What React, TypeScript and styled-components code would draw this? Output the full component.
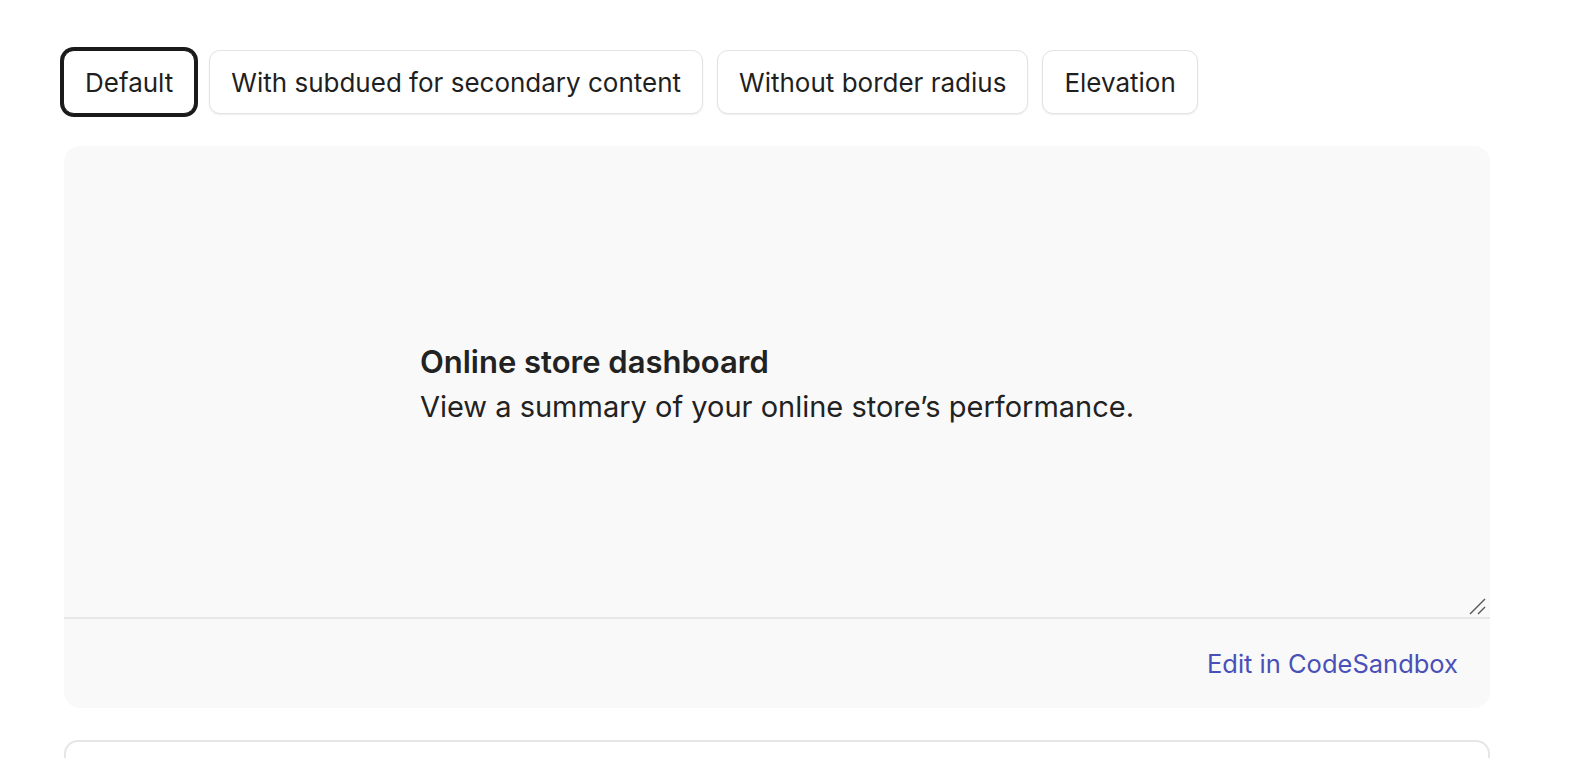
import React, { useState } from "react";
import styled, { createGlobalStyle } from "styled-components";

const Global = createGlobalStyle`
  html, body { margin: 0; padding: 0; background: #ffffff; }
  body { font-family: Inter, "Noto Sans", sans-serif; color: #1f1f1f; overflow: hidden; -webkit-font-smoothing: antialiased; }
  * { box-sizing: border-box; }
`;

const Page = styled.div`
  padding: 50px 0 0 64px;
  width: 1494px;
  display: flex;
  flex-direction: column;
`;

const Tabs = styled.div`
  display: flex;
  gap: 14px;
  align-items: center;
  margin-left: -1px;
`;

const Tab = styled.button<{ $active?: boolean }>`
  height: 64px;
  padding: 0 21px;
  border-radius: 11px;
  border: 1px solid ${(p) => (p.$active ? "#1a1a1a" : "#e3e3e3")};
  background: #ffffff;
  font-family: Inter, sans-serif;
  font-size: 26px;
  font-weight: 400;
  color: #1f1f1f;
  cursor: pointer;
  box-shadow: ${(p) =>
    p.$active ? "0 0 0 3px #1a1a1a" : "0 1px 2px rgba(0,0,0,0.07)"};
`;

const Panel = styled.div`
  margin-top: 32px;
  width: 1426px;
  background: #f9f9f9;
  border-radius: 16px;
  display: flex;
  flex-direction: column;
  overflow: hidden;
`;

const Preview = styled.div`
  position: relative;
  height: 473px;
  border-bottom: 2px solid #e6e6e6;
  display: flex;
  align-items: center;
  justify-content: center;
`;

const TextBlock = styled.div`
  display: flex;
  flex-direction: column;
  gap: 3px;
  margin-top: 3px;
`;

const Heading = styled.h2`
  margin: 0;
  font-size: 31px;
  font-weight: 600;
  line-height: 44px;
  color: #222222;
`;

const Sub = styled.p`
  margin: 0;
  font-size: 29px;
  font-weight: 400;
  line-height: 40px;
  color: #222222;
`;

const Grip = styled.svg`
  position: absolute;
  right: 4px;
  bottom: 2px;
  width: 18px;
  height: 18px;
`;

const Footer = styled.div`
  height: 89px;
  display: flex;
  align-items: center;
  justify-content: flex-end;
  padding-right: 32px;
`;

const Link = styled.a`
  font-size: 25.5px;
  color: #4a50b8;
  text-decoration: none;
  margin-top: -1px;
`;

const NextCard = styled.div`
  margin-top: 32px;
  width: 1426px;
  height: 200px;
  border: 2px solid #e6e6e6;
  border-radius: 14px;
  background: #fff;
`;

const tabs = [
  "Default",
  "With subdued for secondary content",
  "Without border radius",
  "Elevation",
];

export default function App() {
  const [active, setActive] = useState(0);
  return (
    <>
      <Global />
      <Page>
        <Tabs>
          {tabs.map((t, i) => (
            <Tab key={t} $active={i === active} onClick={() => setActive(i)}>
              {t}
            </Tab>
          ))}
        </Tabs>
        <Panel>
          <Preview>
            <TextBlock>
              <Heading>Online store dashboard</Heading>
              <Sub>View a summary of your online store’s performance.</Sub>
            </TextBlock>
            <Grip viewBox="0 0 18 18">
              <line x1="2" y1="17" x2="17" y2="2" stroke="#5a5a5a" strokeWidth="1.4" />
              <line x1="10" y1="17" x2="17" y2="10" stroke="#5a5a5a" strokeWidth="1.4" />
            </Grip>
          </Preview>
          <Footer>
            <Link href="#">Edit in CodeSandbox</Link>
          </Footer>
        </Panel>
        <NextCard />
      </Page>
    </>
  );
}
